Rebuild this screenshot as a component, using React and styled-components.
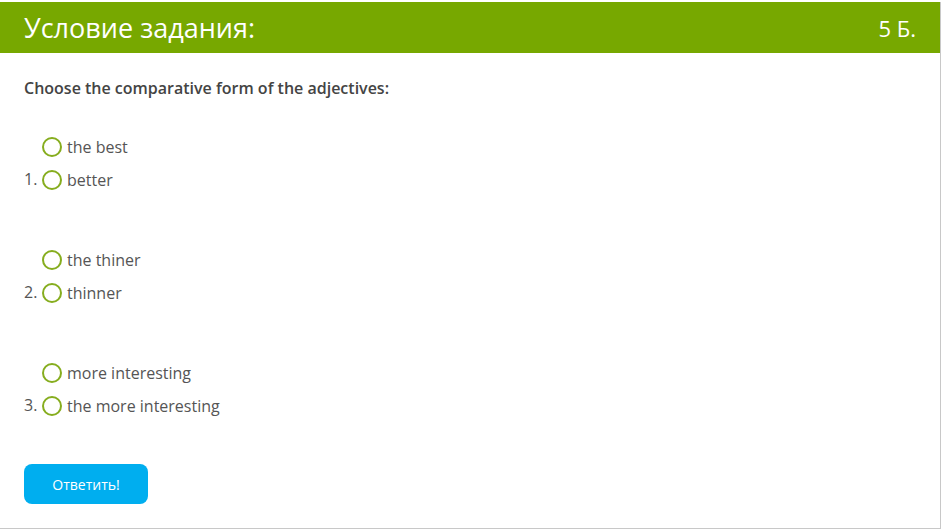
import React from "react";
import styled, { createGlobalStyle } from "styled-components";

const GlobalStyle = createGlobalStyle`
  html, body {
    margin: 0;
    padding: 0;
    background: #fff;
  }
  body {
    font-family: "Open Sans", "Liberation Sans", sans-serif;
  }
`;

const Card = styled.div`
  width: 940px;
  height: 526px;
  margin-top: 2px;
  border-right: 1px solid #c8c8c8;
  border-bottom: 1px solid #c8c8c8;
`;

const Header = styled.div`
  height: 51px;
  background: #77a800;
  color: #fff;
  display: flex;
  align-items: center;
  justify-content: space-between;
  padding: 0 24px;
`;

const Title = styled.h1`
  margin: 0;
  font-size: 27px;
  font-weight: 400;
`;

const Score = styled.span`
  font-size: 22px;
`;

const Body = styled.div`
  padding: 24px 24px 0;
`;

const Question = styled.p`
  margin: 0 0 31px;
  font-size: 16px;
  font-weight: 600;
  color: #444;
  line-height: 22px;
`;

const Item = styled.div`
  display: grid;
  grid-template-columns: 18px 1fr;
  align-items: end;
  margin-bottom: 47px;

  &:last-of-type {
    margin-bottom: 42px;
  }
`;

const Num = styled.span`
  font-size: 16px;
  color: #555;
  line-height: 33px;
`;

const Options = styled.div`
  display: flex;
  flex-direction: column;
`;

const Option = styled.label`
  display: flex;
  align-items: center;
  gap: 5px;
  height: 33px;
  font-size: 16px;
  color: #555;
  cursor: pointer;
`;

const Radio = styled.span`
  width: 16px;
  height: 16px;
  border: 2px solid #86ad1e;
  border-radius: 50%;
  flex-shrink: 0;
`;

const Button = styled.button`
  width: 124px;
  height: 40px;
  border: 0;
  border-radius: 8px;
  background: #00aeef;
  color: #fff;
  font-family: "Open Sans", "Liberation Sans", sans-serif;
  font-size: 14px;
  cursor: pointer;
`;

const questions = [
  ["the best", "better"],
  ["the thiner", "thinner"],
  ["more interesting", "the more interesting"],
];

export default function App() {
  return (
    <>
      <GlobalStyle />
      <Card>
        <Header>
          <Title>Условие задания:</Title>
          <Score>5 Б.</Score>
        </Header>
        <Body>
          <Question>Choose the comparative form of the adjectives:</Question>
          {questions.map((opts, i) => (
            <Item key={i}>
              <Num>{i + 1}.</Num>
              <Options>
                {opts.map((o) => (
                  <Option key={o}>
                    <Radio />
                    {o}
                  </Option>
                ))}
              </Options>
            </Item>
          ))}
          <Button>Ответить!</Button>
        </Body>
      </Card>
    </>
  );
}
